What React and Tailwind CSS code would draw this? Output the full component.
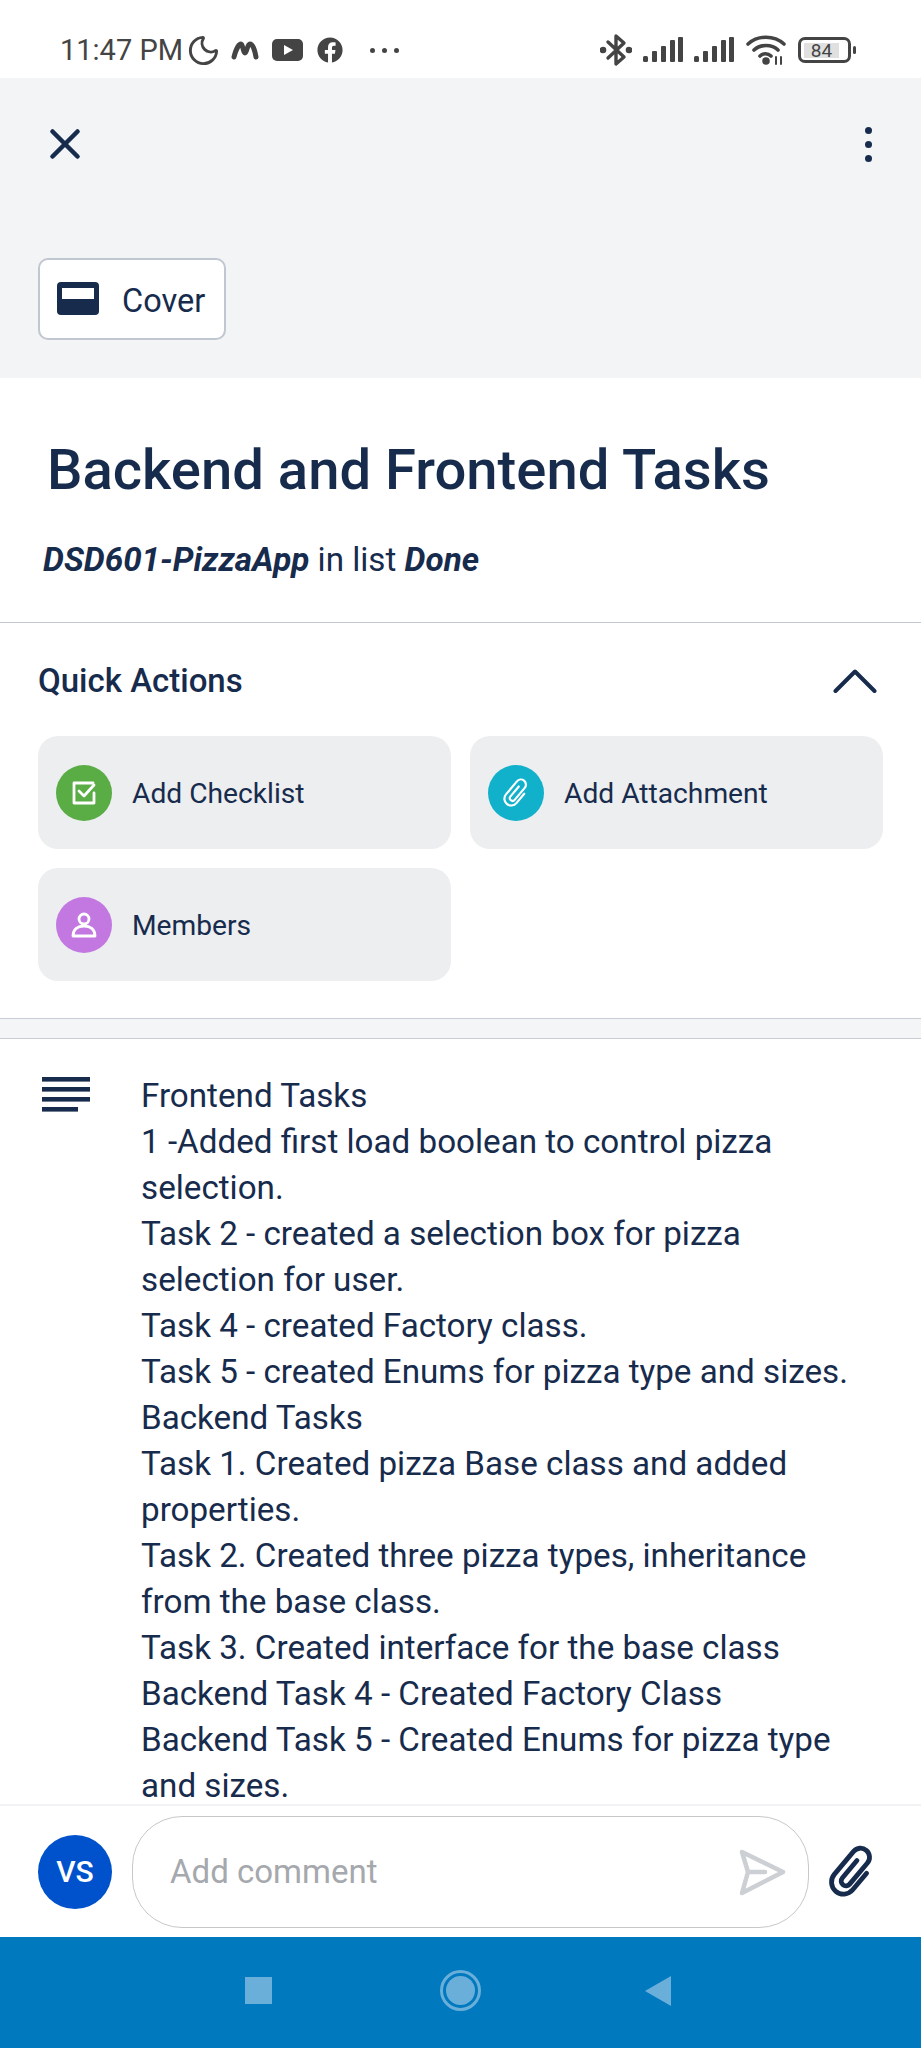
import { Moon, X } from "lucide-react";
import { FaFacebook } from "react-icons/fa";

const lineas = [
  "Frontend Tasks",
  "1 -Added first load boolean to control pizza",
  "selection.",
  "Task 2 - created a selection box for pizza",
  "selection for user.",
  "Task 4 - created Factory class.",
  "Task 5 - created Enums for pizza type and sizes.",
  "Backend Tasks",
  "Task 1. Created pizza Base class and added",
  "properties.",
  "Task 2. Created three pizza types, inheritance",
  "from the base class.",
  "Task 3. Created interface for the base class",
  "Backend Task 4 - Created Factory Class",
  "Backend Task 5 - Created Enums for pizza type",
  "and sizes.",
];

function Signal() {
  return (
    <svg width="41" height="26" viewBox="0 0 41 26" className="text-[#444]" fill="currentColor">
      <rect x="0" y="19" width="5" height="6" rx="1.5" />
      <rect x="9" y="14" width="5" height="11" rx="1" />
      <rect x="18" y="9" width="5" height="16" rx="1" />
      <rect x="27" y="3" width="5" height="22" rx="1" />
      <rect x="35" y="0" width="5" height="25" rx="1" />
    </svg>
  );
}

// clip de doble lazo, lucide no trae uno parecido
function Clip({ size, color, grosor, className }) {
  return (
    <svg width={size} height={size} viewBox="0 0 50 50" fill="none" stroke={color} strokeWidth={grosor} strokeLinecap="round" className={className}>
      <g transform="rotate(40 25 25) translate(5 0)">
        <path d="M17 15 V34 a4 4 0 0 0 8 0 V11 a7.5 7.5 0 0 0 -15 0 V36 a10 10 0 0 0 20 0 V18" />
      </g>
    </svg>
  );
}

function BarraEstado() {
  return (
    <div className="h-[78px] bg-white flex items-center justify-between pl-[60px] pr-[65px] pt-[22px] text-[#444]">
      <div className="flex items-center">
        <span className="text-[29px] leading-none w-[129px] whitespace-nowrap">11:47 PM</span>
        <Moon size={35} strokeWidth={2} className="ml-[-3px]" />
        <svg width="28" height="22" viewBox="0 0 28 22" className="ml-[10px]" fill="none" stroke="currentColor" strokeWidth="5" strokeLinecap="round" strokeLinejoin="round">
          <path d="M3 18 C5 10 8 5 10 5 C12 5 12 14 14 14 C16 14 16 5 19 5 C22 5 24 12 25 18" />
        </svg>
        <svg width="31" height="22" viewBox="0 0 31 22" className="ml-[13px]">
          <rect width="31" height="22" rx="5" fill="currentColor" />
          <path d="M12 6 L21 11 L12 16 Z" fill="#fff" />
        </svg>
        <FaFacebook size={26} className="ml-[14px]" />
        <div className="flex gap-[7px] ml-[27px]">
          <div className="w-[5px] h-[5px] rounded-full bg-[#444]"></div>
          <div className="w-[5px] h-[5px] rounded-full bg-[#444]"></div>
          <div className="w-[5px] h-[5px] rounded-full bg-[#444]"></div>
        </div>
      </div>
      <div className="flex items-center">
        <svg width="32" height="34" viewBox="0 0 32 34" fill="none" stroke="currentColor" strokeWidth="3.4" strokeLinejoin="round" strokeLinecap="round">
          <path d="M8 9 L24 24 L16 31 V3 L24 10 L8 25" />
          <circle cx="3" cy="17" r="1.6" fill="currentColor" />
          <circle cx="29" cy="17" r="1.6" fill="currentColor" />
        </svg>
        <div className="ml-[11px] flex gap-[10px]">
          <Signal />
          <Signal />
        </div>
        <svg width="40" height="30" viewBox="0 0 40 30" className="ml-[11px]" fill="none" stroke="currentColor" strokeWidth="3.6" strokeLinecap="round">
          <path d="M2 9 C12 0 28 0 38 9" />
          <path d="M8 15 C14 9 26 9 32 15" />
          <path d="M14 21 C17 18 22 18 25 21" />
          <circle cx="20" cy="26" r="2" fill="currentColor" />
          <path d="M30 22 V29 M35 22 V29" strokeWidth="2" />
        </svg>
        <div className="ml-[12px] flex items-center">
          <div className="w-[53px] h-[26px] border-[3px] border-[#444] rounded-[7px] flex items-center px-[3px]">
            <div className="w-[35px] h-[15px] bg-[#e0e0e0] text-[19px] leading-[15px] text-center text-[#444]">84</div>
          </div>
          <div className="ml-[2px] w-[3px] h-[8px] bg-[#444] rounded-sm"></div>
        </div>
      </div>
    </div>
  );
}

function AccionRapida({ color, icono, texto }) {
  return (
    <div className="h-[113px] bg-[#eceef0] rounded-[20px] flex items-center pl-[18px]">
      <div className={`w-[56px] h-[56px] rounded-full flex items-center justify-center ${color}`}>
        {icono}
      </div>
      <span className="ml-[20px] pt-[3px] text-[28.2px] text-[#172b4d]">{texto}</span>
    </div>
  );
}

export default function App() {
  return (
    <div className="w-[921px] h-[2048px] flex flex-col bg-white overflow-hidden font-['Roboto',sans-serif]">
      <BarraEstado />

      {/* cabecera gris */}
      <div className="h-[300px] bg-[#f2f4f6] flex flex-col justify-between pb-[38px]">
        <div className="flex items-center justify-between pl-[38px] pr-[49px] pt-[41px]">
          <X size={50} strokeWidth={2.2} className="text-[#172b4d] ml-[2px]" />
          <div className="flex flex-col gap-[7px]">
            <div className="w-[7px] h-[7px] rounded-full bg-[#172b4d]"></div>
            <div className="w-[7px] h-[7px] rounded-full bg-[#172b4d]"></div>
            <div className="w-[7px] h-[7px] rounded-full bg-[#172b4d]"></div>
          </div>
        </div>
        <div className="ml-[38px] w-[188px] h-[82px] bg-white border-2 border-[#c1c7d0] rounded-[10px] flex items-center pl-[17px]">
          <svg width="42" height="34" viewBox="0 0 42 34">
            <rect width="42" height="33" rx="4" fill="#172b4d" />
            <rect x="5" y="6" width="32" height="11" fill="#fff" />
          </svg>
          <span className="ml-[23px] pt-[4px] text-[32.5px] text-[#172b4d]">Cover</span>
        </div>
      </div>

      {/* titulo */}
      <div className="h-[245px] border-b border-[#c1c7d0] pl-[47px] pt-[61px]">
        <h1 className="text-[56.2px] leading-[62px] font-medium text-[#172b4d] whitespace-nowrap">
          Backend and Frontend Tasks
        </h1>
        <p className="ml-[-4px] mt-[39px] text-[33.2px] leading-[40px] text-[#172b4d] whitespace-nowrap">
          <span className="font-bold italic">DSD601-PizzaApp</span> in list <span className="font-bold italic">Done</span>
        </p>
      </div>

      {/* acciones rapidas */}
      <div className="h-[395px] px-[38px]">
        <div className="flex items-center justify-between pt-[3px] h-[113px]">
          <h2 className="text-[33px] font-medium text-[#172b4d]">Quick Actions</h2>
          <svg width="44" height="26" viewBox="0 0 44 26" fill="none" stroke="#172b4d" strokeWidth="4" strokeLinecap="round" strokeLinejoin="round" className="mr-[6px]">
            <path d="M2.5 23 L22 3.5 L41.5 23" />
          </svg>
        </div>
        <div className="grid grid-cols-2 gap-x-[19px] gap-y-[19px]">
          <AccionRapida
            color="bg-[#5aac44]"
            texto="Add Checklist"
            icono={
              <svg width="28" height="28" viewBox="0 0 28 28" fill="none" stroke="#fff" strokeWidth="2.8" strokeLinecap="round" strokeLinejoin="round">
                <path d="M24 14 V24 H4 V4 H23" />
                <path d="M9 12 L14 17 L24 6" />
              </svg>
            }
          />
          <AccionRapida
            color="bg-[#12b1cb]"
            texto="Add Attachment"
            icono={<Clip size={34} color="#fff" grosor={3.2} />}
          />
          <AccionRapida
            color="bg-[#c377e0]"
            texto="Members"
            icono={
              <svg width="28" height="28" viewBox="0 0 28 28" fill="none" stroke="#fff" strokeWidth="2.8" strokeLinejoin="round">
                <circle cx="14" cy="8" r="5" />
                <path d="M3 25 C3 18 8 15 14 15 C20 15 25 18 25 25 Z" />
              </svg>
            }
          />
        </div>
      </div>

      <div className="h-[21px] shrink-0 bg-[#f4f5f7] border-y border-[#c9ced6]"></div>

      {/* descripcion */}
      <div className="flex-1 min-h-0 overflow-hidden flex pl-[42px] pt-[34px]">
        <svg width="48" height="35" viewBox="0 0 48 35" className="mt-[4px] shrink-0 text-[#172b4d]" fill="currentColor">
          <rect x="0" y="0" width="48" height="4.6" />
          <rect x="0" y="10" width="48" height="4.6" />
          <rect x="0" y="20" width="48" height="4.6" />
          <rect x="0" y="30" width="36" height="4.6" />
        </svg>
        <div className="ml-[51px] text-[33.2px] leading-[46px] text-[#172b4d] whitespace-nowrap">
          {lineas.map((linea) => (
            <div key={linea}>{linea}</div>
          ))}
        </div>
      </div>

      {/* comentario */}
      <div className="h-[133px] shrink-0 border-t-2 border-[#f1f2f4] flex items-center pl-[38px]">
        <div className="w-[74px] h-[74px] rounded-full bg-[#0052cc] flex items-center justify-center text-white text-[30px] font-medium">
          VS
        </div>
        <div className="ml-[20px] w-[677px] h-[112px] rounded-[50px] border border-[#c8c8c8] flex items-center justify-between pl-[37px] pr-[22px]">
          <span className="text-[33px] text-[#a5a8ad]">Add comment</span>
          <svg width="48" height="48" viewBox="0 0 48 48" fill="none" stroke="#ccd0d4" strokeWidth="4.5" strokeLinejoin="round" strokeLinecap="round">
            <path d="M4 4 L45 24 L4 45 L10 24 Z" />
            <path d="M10 24 H27" />
          </svg>
        </div>
        <Clip size={60} color="#172b4d" grosor={4} className="ml-[13px]" />
      </div>

      {/* navegacion android */}
      <div className="h-[111px] shrink-0 bg-[#0079bf] flex items-center pl-[245px] pb-[4px]">
        <div className="w-[27px] h-[27px] bg-[#6aafd9]"></div>
        <div className="ml-[168px] w-[41px] h-[41px] rounded-full border-[3px] border-[#6aafd9] flex items-center justify-center">
          <div className="w-[29px] h-[29px] rounded-full bg-[#6aafd9]"></div>
        </div>
        <svg width="28" height="32" viewBox="0 0 28 32" className="ml-[163px]">
          <path d="M27 1 V31 L1 16 Z" fill="#6aafd9" />
        </svg>
      </div>
    </div>
  );
}
